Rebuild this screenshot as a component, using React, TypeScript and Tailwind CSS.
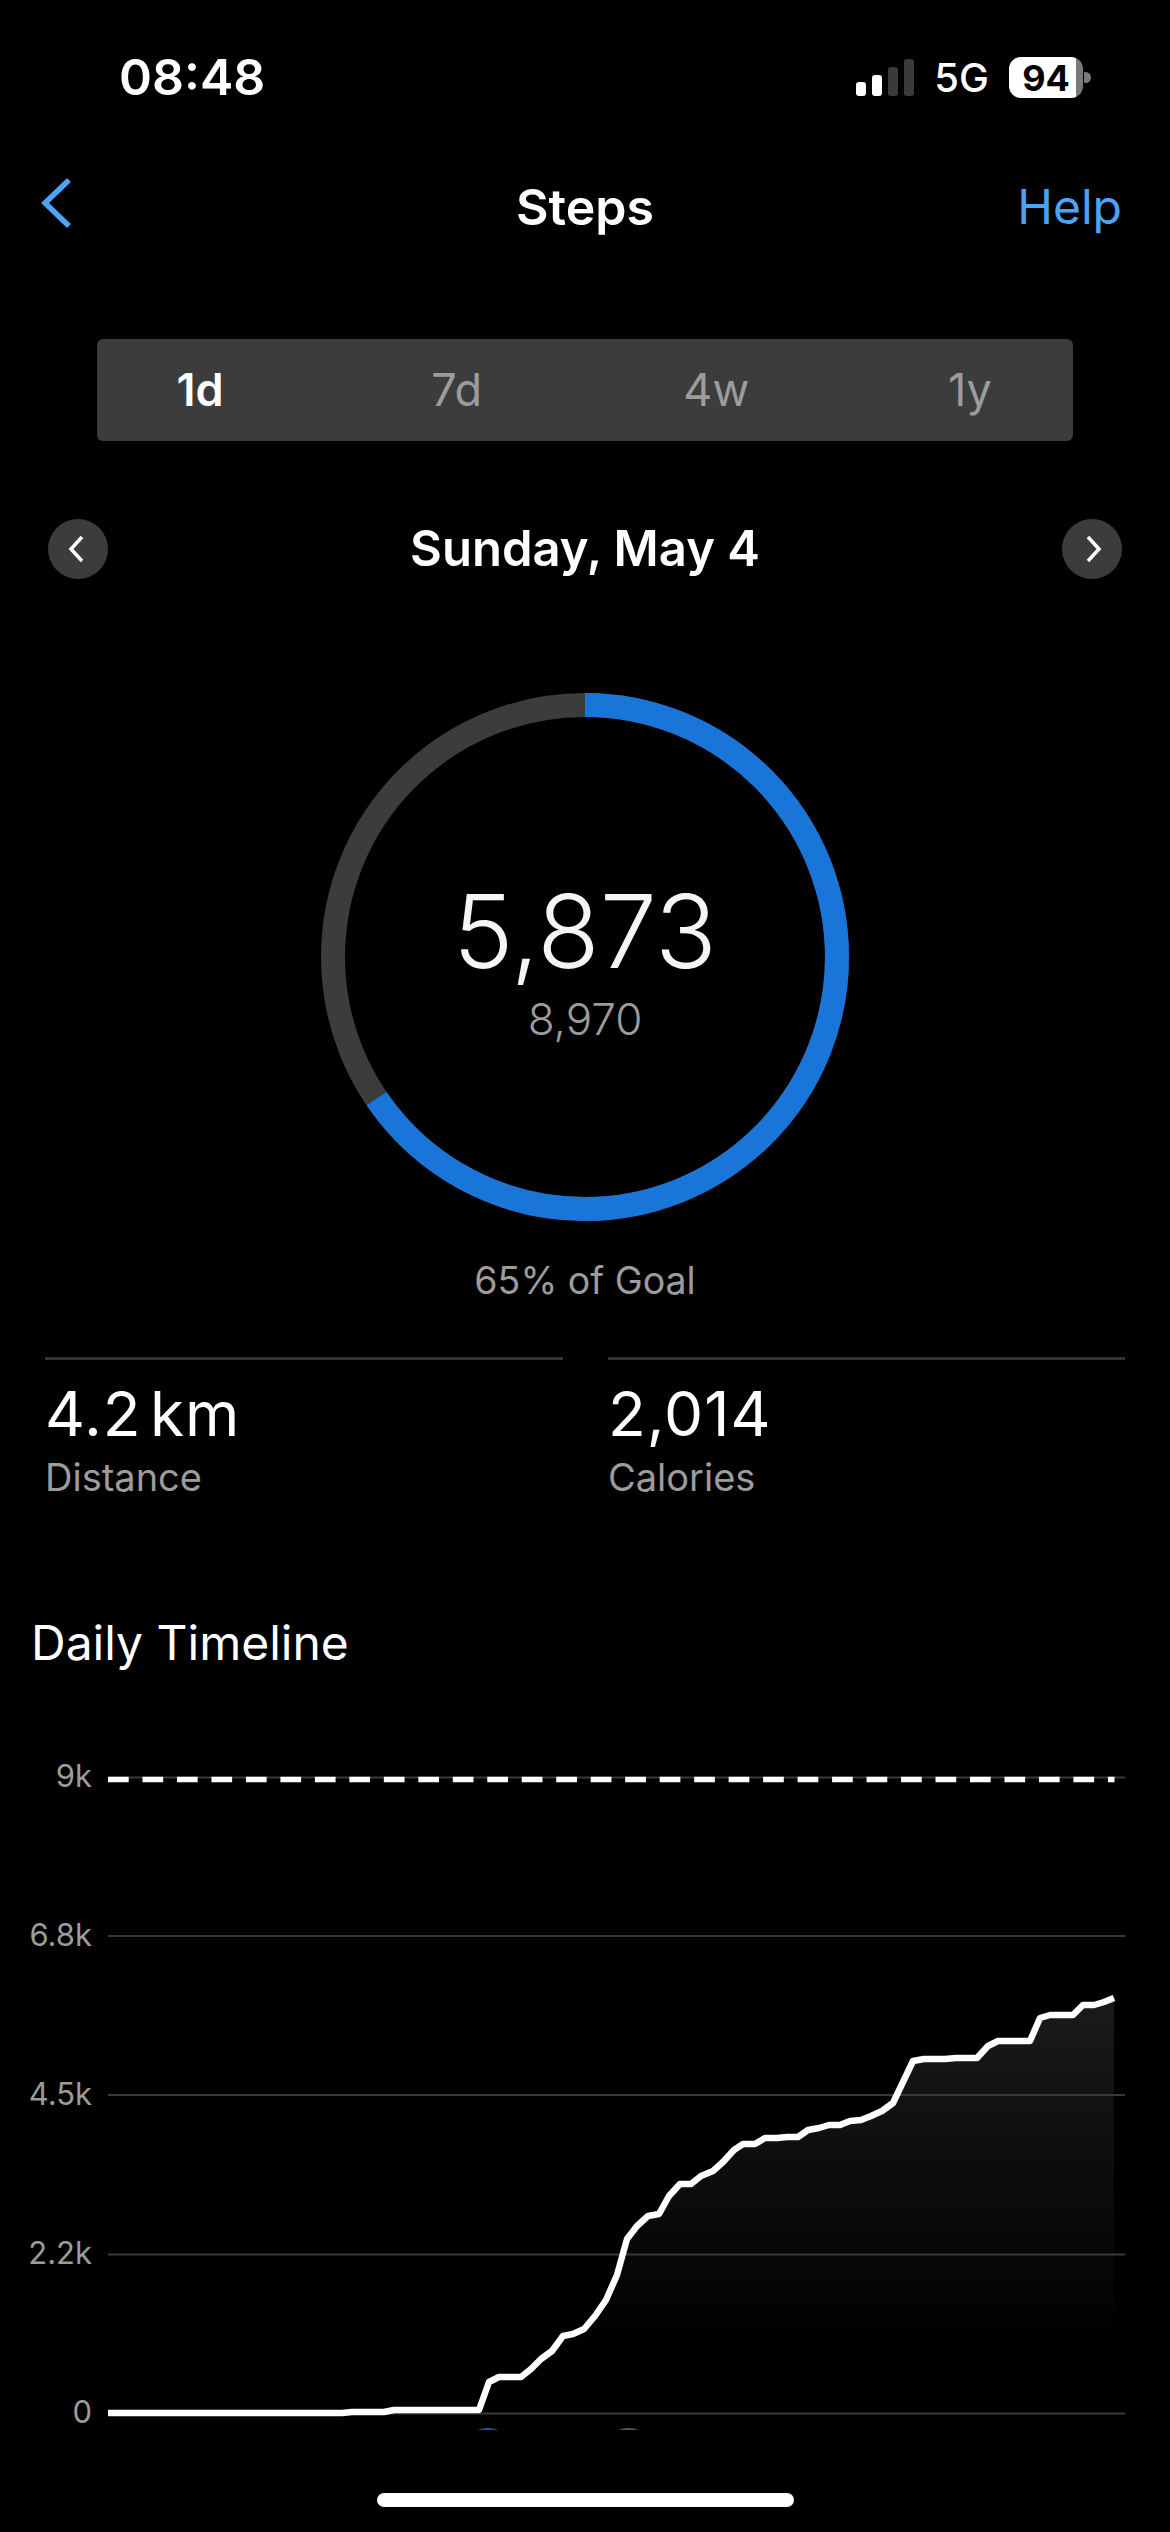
import { useMemo } from "react"

const tabs = ["1d", "7d", "4w", "1y"]
const axisLabels = ["9k", "6.8k", "4.5k", "2.2k", "0"]
const gridLines = [1936, 2095, 2254.5, 2413.5]

// cumulative steps over the day, in chart coordinates
const stepPoints: [number, number][] = [
  [108, 2413], [342, 2413], [352, 2412], [384, 2412], [394, 2410], [479, 2410], [489, 2382], [499, 2377],
  [521, 2377], [531, 2369], [541, 2359], [552, 2351], [563, 2336], [573, 2334], [584, 2329], [595, 2316],
  [606, 2300], [617, 2275], [627, 2239], [637, 2226], [648, 2216], [659, 2214], [669, 2196], [680, 2184],
  [691, 2184], [701, 2176], [713, 2171], [723, 2162], [734, 2150], [743, 2144], [755, 2144], [765, 2138],
  [777, 2138], [787, 2137], [798, 2137], [808, 2130], [819, 2128], [829, 2125], [840, 2125], [850, 2121],
  [861, 2120], [871, 2116], [882, 2111], [893, 2103], [903, 2082], [913, 2061], [924, 2059], [945, 2059],
  [956, 2058], [977, 2058], [988, 2046], [998, 2041], [1030, 2041], [1040, 2018], [1050, 2015], [1073, 2015],
  [1083, 2005], [1094, 2005], [1104, 2002], [1114, 1998],
]

function StatusBar() {
  return (
    <div className="flex h-[150px] items-start justify-between pl-[119px] pr-[79px] pt-[48px]">
      <span className="text-[50px] leading-[58px] font-semibold text-white">08:48</span>
      <div className="flex items-center pt-[9px]">
        <div className="flex items-end gap-[6px]">
          <div className="h-[14px] w-[10px] rounded-[3px] bg-white" />
          <div className="h-[21px] w-[10px] rounded-[3px] bg-white" />
          <div className="h-[29px] w-[10px] rounded-[3px] bg-[#3a3a3a]" />
          <div className="h-[37px] w-[10px] rounded-[3px] bg-[#3a3a3a]" />
        </div>
        <span className="ml-[20px] text-[40px] leading-[41px] font-medium text-white">5G</span>
        <div className="ml-[20px] flex h-[41px] w-[74px] items-center justify-center rounded-[12px] bg-[linear-gradient(90deg,#ffffff_90%,#7a7a7a_90%)] text-[36px] font-bold text-black">
          94
        </div>
        <div className="ml-[1px] h-[11px] w-[7px] rounded-r-full bg-[#7a7a7a]" />
      </div>
    </div>
  )
}

function NavBar() {
  return (
    <div className="grid h-[114px] grid-cols-3 items-center px-[48px]">
      <svg className="mb-[8px] ml-[-7px]" width="30" height="52" viewBox="0 0 30 52" fill="none">
        <path d="M28 3 4 26l24 23" stroke="#4da3f5" strokeWidth="5.5" />
      </svg>
      <span className="text-center text-[50px] font-semibold text-white">Steps</span>
      <span className="justify-self-end text-[48px] text-[#4da3f5]">Help</span>
    </div>
  )
}

function RangeTabs() {
  return (
    <div className="mx-[97px] mt-[75px] flex h-[102px] items-center justify-between rounded-[6px] bg-[#3c3c3c] px-[73px]">
      {tabs.map((tab, i) => (
        <span
          key={tab}
          className={
            i === 0
              ? "w-[60px] text-center text-[45px] font-semibold text-white"
              : "w-[60px] text-center text-[45px] text-[#9c9c9c]"
          }
        >
          {tab}
        </span>
      ))}
    </div>
  )
}

function DateRow() {
  return (
    <div className="mt-[78px] flex h-[60px] items-center justify-between px-[48px]">
      <div className="flex h-[60px] w-[60px] items-center justify-center rounded-full bg-[#3c3c3c]">
        <svg width="20" height="28" viewBox="0 0 20 28" fill="none">
          <path d="M14 2 3 14l11 12" stroke="white" strokeWidth="3.5" />
        </svg>
      </div>
      <span className="text-[49px] font-semibold text-white">Sunday, May 4</span>
      <div className="flex h-[60px] w-[60px] items-center justify-center rounded-full bg-[#3c3c3c]">
        <svg width="20" height="28" viewBox="0 0 20 28" fill="none">
          <path d="M6 2l11 12L6 26" stroke="white" strokeWidth="3.5" />
        </svg>
      </div>
    </div>
  )
}

function GoalRing() {
  const radius = 252
  const circumference = 2 * Math.PI * radius
  const progress = 5873 / 8970

  return (
    <div className="mt-[114px] flex flex-col items-center">
      <div className="relative h-[528px] w-[528px]">
        <svg width="528" height="528" viewBox="0 0 528 528" fill="none">
          <circle cx="264" cy="264" r={radius} stroke="#3c3c3c" strokeWidth="24" />
          <circle
            cx="264"
            cy="264"
            r={radius}
            stroke="#1a75d8"
            strokeWidth="24"
            strokeDasharray={`${circumference * progress} ${circumference}`}
            transform="rotate(-90 264 264)"
          />
        </svg>
        <div className="absolute inset-0 flex flex-col items-center pt-[178px]">
          <span className="text-[102px] leading-[120px] font-light text-[#f5f5f5]">5,873</span>
          <span className="mt-[2px] text-[44px] leading-[52px] font-light text-[#9c9c9c]">8,970</span>
        </div>
      </div>
      <span className="mt-[36px] text-[37.5px] leading-[48px] text-[#9c9c9c]">65% of Goal</span>
    </div>
  )
}

function Stat({ value, label }: { value: string; label: string }) {
  return (
    <div className="border-t-[3px] border-[#333333] pt-[18px]">
      <div className="text-[62px] leading-[72px] tracking-[1px] text-white [word-spacing:-10px]">{value}</div>
      <div className="mt-[4px] text-[38px] leading-[46px] text-[#9c9c9c]">{label}</div>
    </div>
  )
}

function Timeline() {
  const line = useMemo(() => stepPoints.map(([x, y]) => `${x},${y}`).join(" "), [])
  const area = `${line} 1114,2413 489,2413`

  return (
    <div className="mt-[113px]">
      <div className="pl-[31px] text-[48px] leading-[60px] text-white">Daily Timeline</div>
      <div className="mt-[24px] flex">
        <div className="flex w-[108px] shrink-0 flex-col">
          {axisLabels.map((label) => (
            <div key={label} className="flex h-[159px] items-center justify-end pr-[16px] text-[31px] text-[#9c9c9c]">
              {label}
            </div>
          ))}
        </div>
        <svg width="1017" height="733" viewBox="108 1697 1017 733" fill="none">
          <defs>
            <linearGradient id="stepsFill" x1="0" y1="1998" x2="0" y2="2350" gradientUnits="userSpaceOnUse">
              <stop offset="0" stopColor="#1a1a1a" />
              <stop offset="1" stopColor="#000000" />
            </linearGradient>
          </defs>
          <polygon points={area} fill="url(#stepsFill)" />
          <line x1="108" y1="1777.5" x2="1125" y2="1777.5" stroke="#3a3a3a" strokeWidth="2" />
          {gridLines.map((y) => (
            <line key={y} x1="108" y1={y} x2="1125" y2={y} stroke="#3a3a3a" strokeWidth="2" />
          ))}
          <line x1="108" y1="1779.5" x2="1114.5" y2="1779.5" stroke="white" strokeWidth="5.5" strokeDasharray="20.7 13.78" />
          <polyline points={line} stroke="white" strokeWidth="6.5" strokeLinejoin="round" />
          <circle cx="488" cy="2456" r="28" fill="#0a58b0" />
          <circle cx="628.5" cy="2456" r="28" fill="#555555" />
        </svg>
      </div>
    </div>
  )
}

export default function App() {
  return (
    <div className="relative h-[2532px] w-[1170px] overflow-hidden bg-black font-['Inter',sans-serif]">
      <StatusBar />
      <NavBar />
      <RangeTabs />
      <DateRow />
      <GoalRing />
      <div className="mt-[52px] grid grid-cols-[518px_517px] gap-x-[45px] pl-[45px]">
        <Stat value="4.2 km" label="Distance" />
        <Stat value="2,014" label="Calories" />
      </div>
      <Timeline />
      <div className="absolute bottom-[25px] left-[377px] h-[14px] w-[417px] rounded-full bg-white" />
    </div>
  )
}
